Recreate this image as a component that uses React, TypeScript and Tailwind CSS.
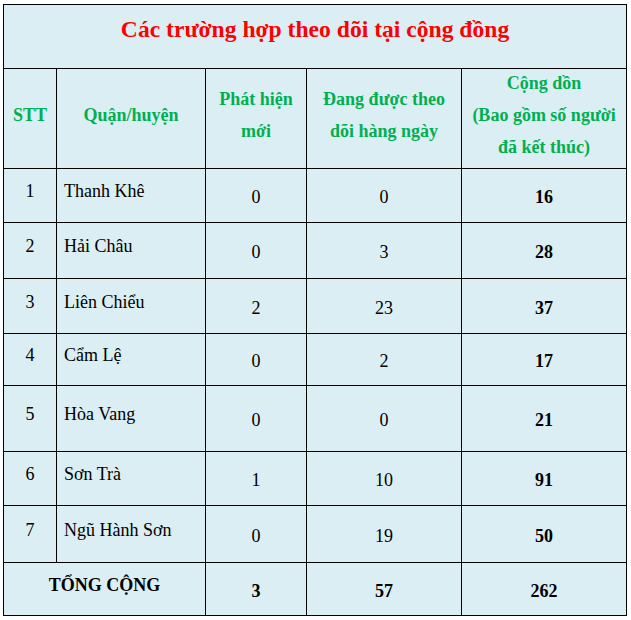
const rows = [
  { stt: "1", name: "Thanh Khê", moi: "0", theoDoi: "0", congDon: "16", h: "h-[54px]" },
  { stt: "2", name: "Hải Châu", moi: "0", theoDoi: "3", congDon: "28", h: "h-[56px]" },
  { stt: "3", name: "Liên Chiểu", moi: "2", theoDoi: "23", congDon: "37", h: "h-[55px]" },
  { stt: "4", name: "Cẩm Lệ", moi: "0", theoDoi: "2", congDon: "17", h: "h-[52px]" },
  { stt: "5", name: "Hòa Vang", moi: "0", theoDoi: "0", congDon: "21", h: "h-[66px]" },
  { stt: "6", name: "Sơn Trà", moi: "1", theoDoi: "10", congDon: "91", h: "h-[54px]" },
  { stt: "7", name: "Ngũ Hành Sơn", moi: "0", theoDoi: "19", congDon: "50", h: "h-[57px]" },
];

export default function App() {
  return (
    <div className="w-[631px] h-[620px] bg-white pl-[3px] pt-[4px] font-['Liberation_Serif','Times_New_Roman',serif] text-[18px] text-black">
      <table className="w-[623px] table-fixed border-collapse bg-[#dbeef4]">
        <colgroup>
          <col className="w-[53px]" />
          <col className="w-[149px]" />
          <col className="w-[101px]" />
          <col className="w-[155px]" />
          <col className="w-[165px]" />
        </colgroup>
        <tbody>
          <tr className="h-[64px]">
            <td colSpan={5} className="border border-black pb-[13px] text-center text-[23.6px] font-bold text-[#ff0000]">
              Các trường hợp theo dõi tại cộng đồng
            </td>
          </tr>

          {/* header */}
          <tr className="h-[100px] text-center font-bold leading-[32px] text-[#00b050]">
            <td className="border border-black p-0">
              <div className="-mt-[8px]">STT</div>
            </td>
            <td className="border border-black p-0">
              <div className="-mt-[8px]">Quận/huyện</div>
            </td>
            <td className="border border-black p-0">
              <div className="-mt-[8px]">
                Phát hiện
                <br />
                mới
              </div>
            </td>
            <td className="border border-black p-0">
              <div className="-mt-[8px]">
                Đang được theo
                <br />
                dõi hàng ngày
              </div>
            </td>
            <td className="border border-black p-0">
              <div className="-mt-[8px]">
                Cộng dồn
                <br />
                (Bao gồm số người
                <br />
                đã kết thúc)
              </div>
            </td>
          </tr>

          {rows.map((r) => (
            <tr key={r.stt} className={r.h}>
              <td className="border border-black pb-[8px] text-center">{r.stt}</td>
              <td className="border border-black pb-[8px] pl-[7px]">{r.name}</td>
              <td className="border border-black pt-[4px] text-center">{r.moi}</td>
              <td className="border border-black pt-[4px] text-center">{r.theoDoi}</td>
              <td className="border border-black pt-[4px] text-center font-bold">{r.congDon}</td>
            </tr>
          ))}

          <tr className="h-[53px] font-bold">
            <td colSpan={2} className="border border-black pb-[8px] text-center">
              TỔNG CỘNG
            </td>
            <td className="border border-black pt-[4px] text-center">3</td>
            <td className="border border-black pt-[4px] text-center">57</td>
            <td className="border border-black pt-[4px] text-center">262</td>
          </tr>
        </tbody>
      </table>
    </div>
  );
}
